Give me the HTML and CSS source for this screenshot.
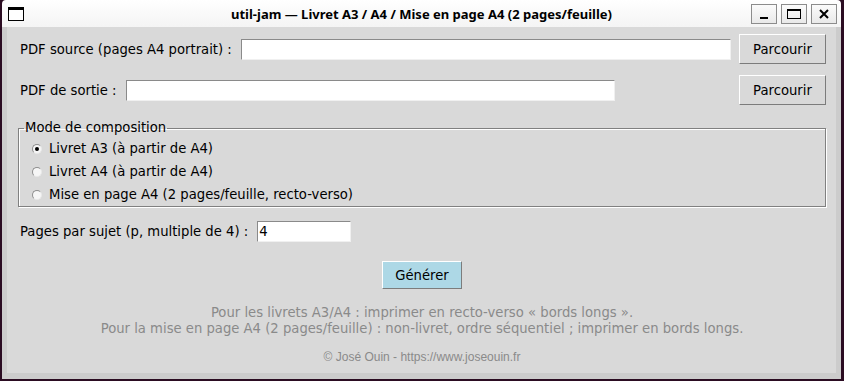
FILE: index.html
```html
<!DOCTYPE html>
<html lang="fr">
<head>
    <meta charset="UTF-8">
    <title>util-jam — Livret A3 / A4 / Mise en page A4 (2 pages/feuille)</title>
    <link rel="stylesheet" href="styles.css">
</head>
<body>
    <div class="window">
        <div class="titlebar">
            <div class="app-icon"></div>
            <div class="title">util-jam — Livret A3 / A4 / Mise en page A4 (2 pages/feuille)</div>
            <div class="win-buttons">
                <span class="win-btn"><span class="ic-min"></span></span>
                <span class="win-btn"><span class="ic-max"></span></span>
                <span class="win-btn">
                    <svg width="10" height="10" viewBox="0 0 10 10"><path d="M1 1L9 9M9 1L1 9" stroke="#000" stroke-width="2"/></svg>
                </span>
            </div>
        </div>
        <div class="frame">
            <div class="content">
                <div class="row">
                    <label class="lbl">PDF source (pages A4 portrait) :</label>
                    <input type="text" class="entry entry-src">
                    <button class="tk-btn browse">Parcourir</button>
                </div>
                <div class="row row-gap">
                    <label class="lbl">PDF de sortie :</label>
                    <input type="text" class="entry entry-out">
                    <button class="tk-btn browse">Parcourir</button>
                </div>

                <fieldset class="group">
                    <legend>Mode de composition</legend>
                    <div class="radio"><span class="dot checked"></span>Livret A3 (à partir de A4)</div>
                    <div class="radio"><span class="dot"></span>Livret A4 (à partir de A4)</div>
                    <div class="radio"><span class="dot"></span>Mise en page A4 (2 pages/feuille, recto-verso)</div>
                </fieldset>

                <div class="row row-pages">
                    <label class="lbl">Pages par sujet (p, multiple de 4) :</label>
                    <input type="text" class="entry entry-pages" value="4">
                </div>

                <div class="actions">
                    <button class="tk-btn generate">Générer</button>
                </div>

                <p class="info">Pour les livrets A3/A4 : imprimer en recto-verso « bords longs ».<br>Pour la mise en page A4 (2 pages/feuille) : non-livret, ordre séquentiel ; imprimer en bords longs.</p>
                <p class="copy">© José Ouin - https://www.joseouin.fr</p>
            </div>
        </div>
    </div>
</body>
</html>
```

FILE: styles.css
```css
body {
    margin: 0;
    height: 381px;
    overflow: hidden;
    background-color: #2b0c22;
    font-family: "DejaVu Sans", sans-serif;
    font-size: 13.2px;
    color: #000;
}

.window {
    margin-left: 2px;
    width: 839px;
}

/* barre de titre */
.titlebar {
    height: 27px;
    display: grid;
    grid-template-columns: 1fr auto 1fr;
    align-items: center;
    background: linear-gradient(#ffffff, #f4f4f4);
    border-radius: 4px 4px 0 0;
    box-sizing: border-box;
}

.app-icon {
    width: 14px;
    height: 10px;
    margin-left: 6px;
    border: 1px solid #000;
    border-top-width: 3px;
    background-color: #fff;
}

.title {
    font-family: "Noto Sans", sans-serif;
    font-size: 13px;
    font-weight: bold;
    white-space: nowrap;
}

.win-buttons {
    display: flex;
    justify-content: flex-end;
    gap: 4px;
    padding-right: 4px;
}

.win-btn {
    width: 24px;
    height: 18px;
    border: 1px solid #8c8c8c;
    background: linear-gradient(#fbfbfb, #e9e9e9);
    display: flex;
    align-items: center;
    justify-content: center;
}

.ic-min {
    width: 8px;
    height: 2px;
    background-color: #000;
    margin-top: 8px;
}

.ic-max {
    width: 12px;
    height: 7px;
    border: 1px solid #000;
    border-top-width: 2px;
}

/* cadre de la fenêtre */
.frame {
    background-color: #cccccc;
    padding: 0 5px 6px 5px;
}

.content {
    height: 346px;
    background-color: #d9d9d9;
    padding: 7px 10px 0 11px;
    box-sizing: border-box;
}

.row {
    display: flex;
    align-items: center;
    height: 30px;
    padding-left: 2px;
}

.row-gap {
    margin-top: 11px;
}

.lbl {
    white-space: nowrap;
}

.entry {
    height: 21px;
    box-sizing: border-box;
    margin-left: 9px;
    border: 1px solid;
    border-color: #8a8a8a #f0f0f0 #f0f0f0 #8a8a8a;
    background-color: #fff;
    font-family: "DejaVu Sans", sans-serif;
    font-size: 13.2px;
    padding: 0 1px;
    outline: none;
}

.entry-src {
    width: 490px;
}

.entry-out {
    width: 489px;
}

.entry-pages {
    width: 94px;
}

.tk-btn {
    font-family: "DejaVu Sans", sans-serif;
    font-size: 13.2px;
    color: #000;
    background-color: #d9d9d9;
    border: 1px solid;
    border-color: #ffffff #7c7c7c #7c7c7c #ffffff;
    padding: 0;
}

.browse {
    margin-left: auto;
    width: 87px;
    height: 30px;
}

/* groupe de boutons radio */
.group {
    margin: 15px 0 0 0;
    padding: 1px 0 0 13px;
    border: 1px solid #808080;
    box-shadow: inset 1px 1px 0 #fff, 1px 1px 0 #fff;
    width: 808px;
    box-sizing: border-box;
}

.group legend {
    padding: 0 1px;
    margin-left: -8px;
    line-height: 16px;
}

.radio {
    height: 23px;
    display: flex;
    align-items: center;
}

.dot {
    width: 10px;
    height: 10px;
    box-sizing: border-box;
    border-radius: 50%;
    border: 1px solid;
    border-color: #8e8e8e #e8e8e8 #e8e8e8 #8e8e8e;
    background-color: #f6f6f6;
    margin-right: 7px;
    display: flex;
    align-items: center;
    justify-content: center;
}

.dot.checked::after {
    content: "";
    width: 4px;
    height: 4px;
    border-radius: 50%;
    background-color: #000;
}

.row-pages {
    height: 21px;
    margin-top: 14px;
}

.actions {
    display: flex;
    justify-content: center;
    margin-top: 19px;
}

.generate {
    width: 80px;
    height: 28px;
    background-color: #add8e6;
}

.info {
    margin: 16px 0 0 0;
    text-align: center;
    line-height: 16px;
    color: #8a8a8a;
}

.copy {
    margin: 12px 0 0 0;
    text-align: center;
    line-height: 16px;
    font-family: "Liberation Sans", Arial, sans-serif;
    font-size: 12px;
    color: #8a8a8a;
}
```
